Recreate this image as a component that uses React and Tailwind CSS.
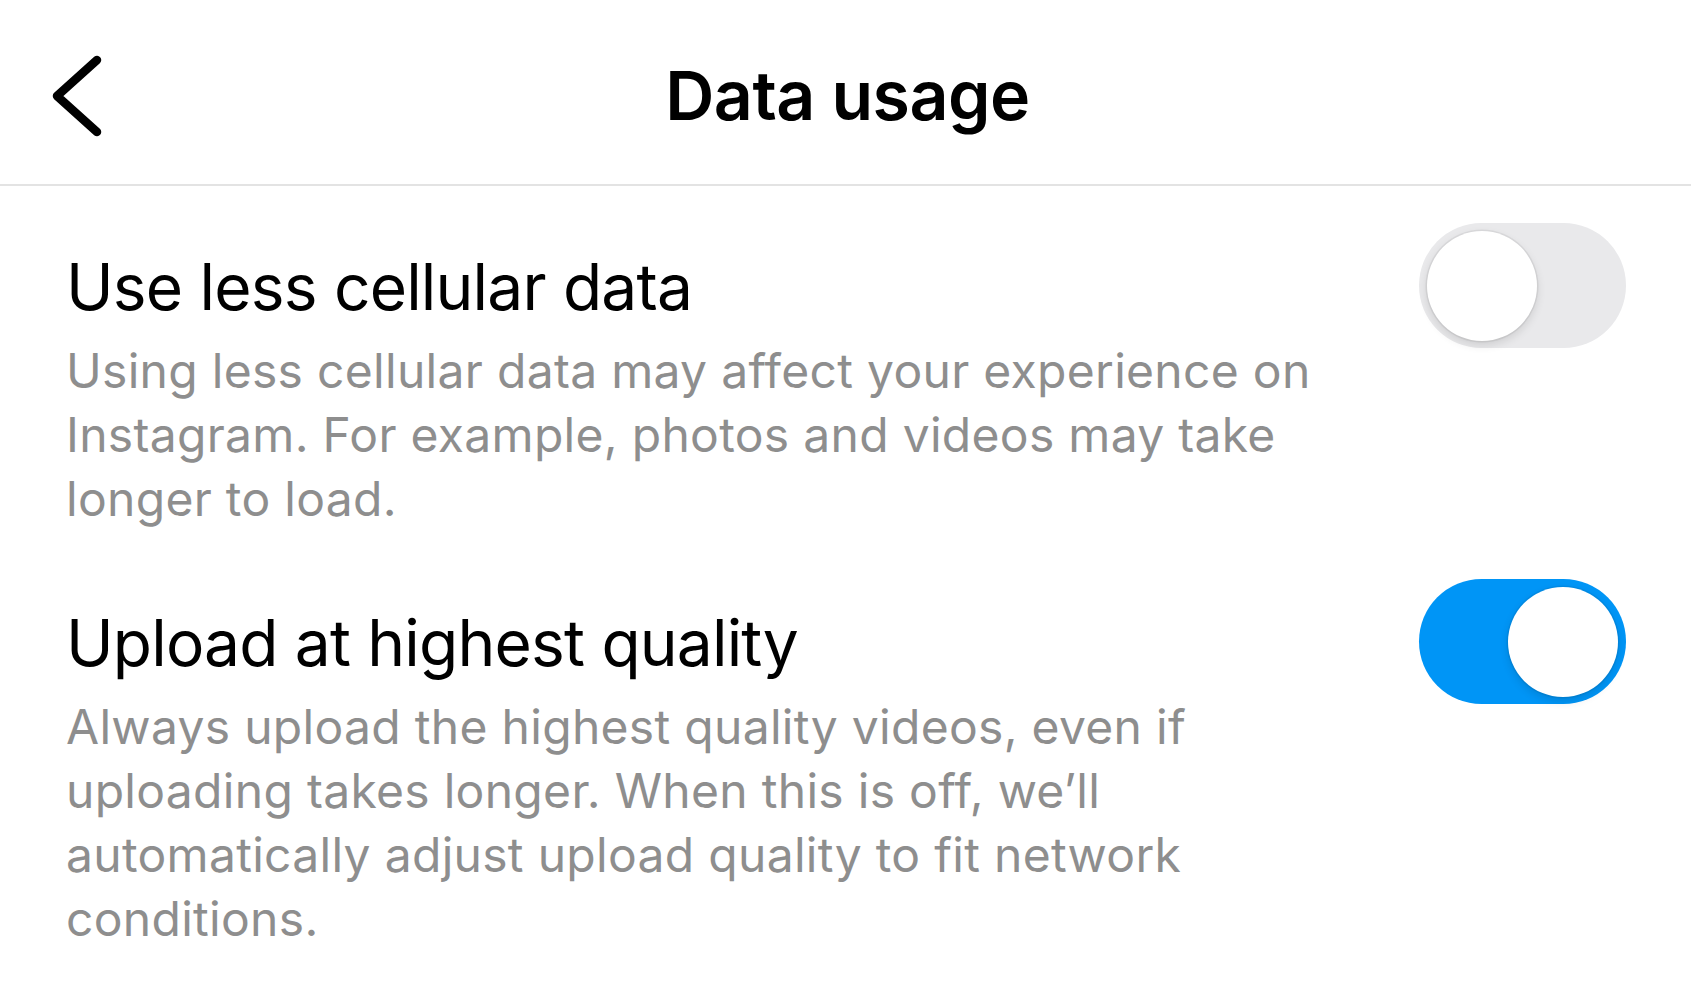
import { useState } from 'react'

const SETTINGS = [
  {
    key: 'lessData',
    title: 'Use less cellular data',
    body: 'Using less cellular data may affect your experience on Instagram. For example, photos and videos may take longer to load.',
    on: false,
  },
  {
    key: 'highQuality',
    title: 'Upload at highest quality',
    body: 'Always upload the highest quality videos, even if uploading takes longer. When this is off, we\u2019ll automatically adjust upload quality to fit network conditions.',
    on: true,
  },
]

function Toggle({ on, onChange }) {
  return (
    <button
      onClick={onChange}
      className={`relative flex-shrink-0 w-[207px] h-[125px] rounded-full transition-colors ${
        on ? 'bg-[#0095f6]' : 'bg-[#e9e9eb]'
      }`}
    >
      <span
        className={`absolute top-[7.5px] w-[110px] h-[110px] rounded-full bg-white shadow-[0_0_0_1.5px_rgba(0,0,0,0.06),0_4px_10px_rgba(0,0,0,0.12)] transition-all ${
          on ? 'left-[89px]' : 'left-[8px]'
        }`}
      />
    </button>
  )
}

function SettingRow({ item, on, onToggle }) {
  return (
    <div className="flex items-start gap-[60px]">
      <div className="flex-1 min-w-0 pt-[25px]">
        <p className="text-[64px] leading-[77px] text-black tracking-[-0.8px]">{item.title}</p>
        <p className="mt-[14px] text-[48px] leading-[64px] text-[#8e8e8e] tracking-[0.3px]">{item.body}</p>
      </div>
      <Toggle on={on} onChange={onToggle} />
    </div>
  )
}

export default function App() {
  const [state, setState] = useState(() =>
    Object.fromEntries(SETTINGS.map(s => [s.key, s.on]))
  )

  return (
    <div className="min-h-screen bg-white" style={{ fontFamily: 'Inter, "Noto Sans", sans-serif' }}>
      {/* Top bar */}
      <div className="relative h-[186px] flex items-center justify-center border-b-2 border-[#e3e3e3]">
        <button className="absolute left-[50px] top-[55px]">
          <svg width="56" height="82" viewBox="0 0 56 82" fill="none">
            <path d="M47 5 L7 41 L47 77" stroke="black" strokeWidth="8.5" strokeLinecap="round" strokeLinejoin="round" />
          </svg>
        </button>
        <h1 className="text-[68px] font-semibold text-black tracking-[-0.5px] mt-[6px] ml-[4px]">Data usage</h1>
      </div>

      {/* Settings */}
      <div className="pl-[66px] pr-[65px] pt-[37px] flex flex-col gap-[48px]">
        {SETTINGS.map(s => (
          <SettingRow
            key={s.key}
            item={s}
            on={state[s.key]}
            onToggle={() => setState(prev => ({ ...prev, [s.key]: !prev[s.key] }))}
          />
        ))}
      </div>
    </div>
  )
}
